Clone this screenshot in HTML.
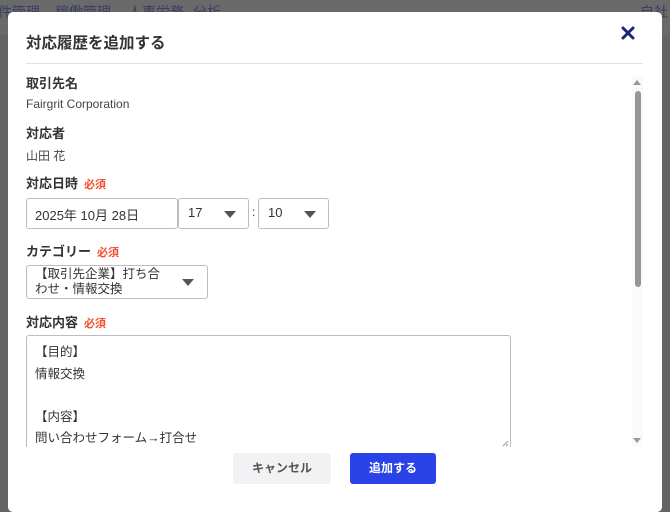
<!DOCTYPE html>
<html><head><meta charset="utf-8"><style>
*{box-sizing:border-box;margin:0;padding:0}
body{width:670px;height:500px;overflow:hidden;background:#646464;font-family:"Liberation Sans","Noto Sans CJK JP",sans-serif;position:relative;color:#333}
.bgnav{position:absolute;top:0;left:0;width:670px;height:35px;background:#6a6a6a;color:#3a3f60;font-size:14px}
.bgnav span{position:absolute;top:2px}
.modal{position:absolute;left:8px;top:12px;width:654px;height:500px;background:#fff;border-radius:5px}
.title{position:absolute;left:18px;top:19px;font-size:15.5px;font-weight:bold;color:#333}
.close{position:absolute;left:612px;top:13px}
.hr{position:absolute;left:18px;top:51px;width:617px;height:1px;background:#e2e2e2}
.clip{position:absolute;left:0;top:52px;width:624px;height:383px;overflow:hidden}
.lbl{position:absolute;left:18px;font-size:13px;font-weight:bold;color:#333}
.req{color:#f0522e;font-size:11px;margin-left:6px}
.val{position:absolute;left:18px;font-size:12px;color:#444}
.box{position:absolute;border:1px solid #bdbdbd;border-radius:3px;background:#fff;font-size:13px;color:#333}
.tri{position:absolute;width:0;height:0;border-left:6px solid transparent;border-right:6px solid transparent;border-top:7px solid #555}
.track{position:absolute;left:624px;top:64px;width:11px;height:371px;background:#fafafa}
.thumb{position:absolute;left:627px;top:79px;width:6px;height:196px;background:#969696;border-radius:3px}
.btn{position:absolute;top:441px;height:31px;border-radius:3px;font-size:12px;font-weight:bold;text-align:center;line-height:31px}
</style></head><body>
<div class="bgnav"><span style="left:-2px">件管理</span><span style="left:55px">稼働管理</span><span style="left:128px">人事労務</span><span style="left:193px">分析</span><span style="left:640px">自社</span></div>
<div class="modal">
<div class="title">対応履歴を追加する</div>
<svg class="close" width="16" height="16" viewBox="0 0 16 16"><path d="M3 3L13 13M13 3L3 13" stroke="#1e237a" stroke-width="3" stroke-linecap="round"/></svg>
<div class="hr"></div>
<div class="clip">
<div class="lbl" style="top:9px">取引先名</div>
<div class="val" style="top:33px">Fairgrit Corporation</div>
<div class="lbl" style="top:59px">対応者</div>
<div class="val" style="top:83px">山田 花</div>
<div class="lbl" style="top:109px">対応日時<span class="req">必須</span></div>
<div class="box" style="left:18px;top:134px;width:152px;height:31px;padding:6px 8px">2025年 10月 28日</div>
<div class="box" style="left:170px;top:134px;width:71px;height:31px;padding:6px 9px">17<div class="tri" style="left:45px;top:12px"></div></div>
<div style="position:absolute;left:244px;top:141px;font-size:12px">:</div>
<div class="box" style="left:250px;top:134px;width:71px;height:31px;padding:6px 9px">10<div class="tri" style="left:45px;top:12px"></div></div>
<div class="lbl" style="top:177px">カテゴリー<span class="req">必須</span></div>
<div class="box" style="left:18px;top:201px;width:182px;height:34px;padding:1px 8px;font-size:12.5px;line-height:15px">【取引先企業】打ち合<br>わせ・情報交換<div class="tri" style="left:155px;top:13px"></div></div>
<div class="lbl" style="top:248px">対応内容<span class="req">必須</span></div>
<div class="box" style="left:18px;top:271px;width:485px;height:114px;padding:6px 8px;line-height:21.5px;font-size:12.5px">【目的】<br>情報交換<br><br>【内容】<br>問い合わせフォーム→打合せ
<svg style="position:absolute;right:1px;bottom:1px" width="7" height="7"><path d="M1 6L6 1M4 6L6 4" stroke="#999" stroke-width="1"/></svg></div>
</div>
<div class="track"></div>
<div style="position:absolute;left:625px;top:68px;border-left:4px solid transparent;border-right:4px solid transparent;border-bottom:5px solid #999"></div>
<div style="position:absolute;left:625px;top:426px;border-left:4px solid transparent;border-right:4px solid transparent;border-top:5px solid #999"></div>
<div class="thumb"></div>
<div class="btn" style="left:225px;width:98px;background:#f2f2f4;color:#555">キャンセル</div>
<div class="btn" style="left:342px;width:86px;background:#2a43e8;color:#fff">追加する</div>
</div>
</body></html>
